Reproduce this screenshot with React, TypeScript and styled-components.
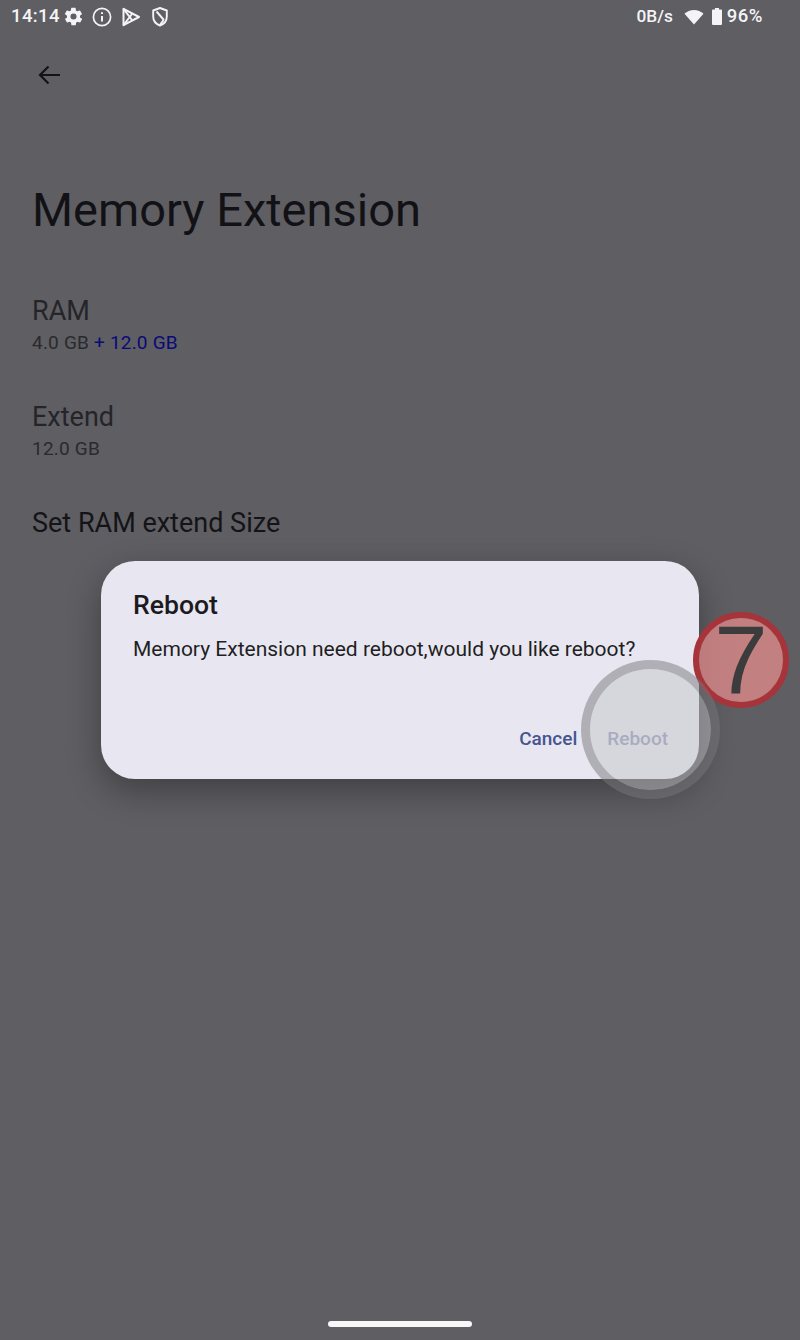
import styled, { createGlobalStyle } from "styled-components";

const Global = createGlobalStyle`
  html, body {
    margin: 0;
    padding: 0;
    background: #5e5e63;
  }
  * {
    box-sizing: border-box;
  }
`;

const Screen = styled.div`
  position: relative;
  width: 800px;
  height: 1340px;
  overflow: hidden;
  background: #5e5e63;
  font-family: Roboto, "Liberation Sans", sans-serif;
  color: #1b1b1f;
`;

const StatusBar = styled.div`
  height: 33px;
  padding: 0 37px 0 11px;
  display: flex;
  align-items: center;
  justify-content: space-between;
  color: #f4f4f6;
`;

const StatusGroup = styled.div`
  display: flex;
  align-items: center;
`;

const Clock = styled.span`
  font-size: 18.5px;
  font-weight: 500;
  letter-spacing: 0.4px;
  margin: -2px 3px 0 0;
`;

const StatusIcon = styled.svg<{ $gap?: number }>`
  display: block;
  margin-left: ${(p) => p.$gap ?? 0}px;
`;

const Speed = styled.span`
  font-size: 17.3px;
  font-weight: 500;
  margin: -2px 11px 0 0;
`;

const Percent = styled.span`
  font-size: 18.5px;
  font-weight: 500;
  letter-spacing: 0.5px;
  margin: -2px 0 0 5px;
`;

const Content = styled.div`
  padding: 0 32px;
`;

const BackButton = styled.div`
  height: 24px;
  margin: 30px 0 0 4px;
  color: #141416;
`;

const Title = styled.h1`
  margin: 93px 0 0;
  font-size: 47px;
  line-height: 60px;
  font-weight: 400;
  color: #121216;
`;

const Section = styled.div<{ $top: number }>`
  margin-top: ${(p) => p.$top}px;
`;

const Label = styled.div<{ $strong?: boolean }>`
  font-size: 27px;
  line-height: 36px;
  color: ${(p) => (p.$strong ? "#141417" : "#252529")};
`;

const Value = styled.div`
  font-size: 19px;
  line-height: 28px;
  letter-spacing: 0.2px;
  color: #2a2a2e;
`;

const Extra = styled.span`
  color: #0a0a78;
`;

const Dialog = styled.div`
  position: absolute;
  left: 101px;
  top: 561px;
  width: 598px;
  height: 218px;
  padding: 27px 32px 0;
  border-radius: 34px;
  background: #e8e7f1;
  box-shadow: 0 12px 34px rgba(0, 0, 0, 0.32);
`;

const DialogTitle = styled.div`
  font-size: 26.6px;
  line-height: 34px;
  font-weight: 500;
  color: #1b1b1f;
`;

const DialogBody = styled.div`
  margin-top: 14px;
  font-size: 21px;
  line-height: 26px;
  white-space: nowrap;
  color: #1f1f23;
`;

const DialogActions = styled.div`
  position: absolute;
  right: 31px;
  bottom: 28px;
  display: flex;
  gap: 30px;
`;

const Action = styled.span<{ $muted?: boolean }>`
  font-size: 19px;
  line-height: 24px;
  font-weight: 500;
  color: ${(p) => (p.$muted ? "#8e96b8" : "#46558f")};
`;

const Touch = styled.div`
  position: absolute;
  left: 581px;
  top: 660px;
  width: 139px;
  height: 139px;
  border-radius: 50%;
  border: 9px solid rgba(120, 120, 124, 0.5);
  background: rgba(196, 196, 200, 0.49);
  background-clip: padding-box;
`;

const StepBadge = styled.div`
  position: absolute;
  left: 693px;
  top: 612px;
  width: 96px;
  height: 96px;
  border-radius: 50%;
  border: 6px solid #a5353b;
  background: rgba(243, 145, 145, 0.67);
  display: flex;
  align-items: center;
  justify-content: center;
  font-family: "Liberation Sans", Arimo, sans-serif;
  font-size: 96px;
  line-height: 1;
  color: #3c3c3c;
`;

const HomeBar = styled.div`
  position: absolute;
  left: 328px;
  top: 1321px;
  width: 144px;
  height: 6px;
  border-radius: 3px;
  background: #f7f7f8;
`;

const App = () => {
  return (
    <Screen>
      <Global />
      <StatusBar>
        <StatusGroup>
          <Clock>14:14</Clock>
          <StatusIcon width="21" height="21" viewBox="0 0 24 24" fill="currentColor">
            <path d="M19.4 13a7.6 7.6 0 0 0 0-2l2.1-1.6a.5.5 0 0 0 .1-.6l-2-3.5a.5.5 0 0 0-.6-.2l-2.5 1a7.3 7.3 0 0 0-1.7-1l-.4-2.7a.5.5 0 0 0-.5-.4h-4a.5.5 0 0 0-.5.4l-.4 2.7a7.3 7.3 0 0 0-1.7 1l-2.5-1a.5.5 0 0 0-.6.2l-2 3.5a.5.5 0 0 0 .1.6L4.6 11a7.6 7.6 0 0 0 0 2l-2.1 1.6a.5.5 0 0 0-.1.6l2 3.5c.1.2.4.3.6.2l2.5-1c.5.4 1.1.7 1.7 1l.4 2.7c0 .2.2.4.5.4h4c.3 0 .5-.2.5-.4l.4-2.7c.6-.3 1.2-.6 1.7-1l2.5 1c.2.1.5 0 .6-.2l2-3.5a.5.5 0 0 0-.1-.6ZM12 15.5a3.5 3.5 0 1 1 0-7 3.5 3.5 0 0 1 0 7Z" />
          </StatusIcon>
          <StatusIcon $gap={8} width="20" height="20" viewBox="0 0 20 20" fill="none" stroke="currentColor" strokeWidth="1.7">
            <circle cx="10" cy="10" r="8.6" />
            <path d="M10 9v5.500M10 5.300v1.800" strokeWidth="2" />
          </StatusIcon>
          <StatusIcon $gap={10} width="18" height="20" viewBox="0 0 18 20" fill="none" stroke="currentColor" strokeWidth="2" strokeLinejoin="round">
            <path d="M1.500 1.800v16.400L17 10Z" />
            <path d="M1.500 1.800 10 13M1.500 18.200 10 7" />
          </StatusIcon>
          <StatusIcon $gap={12} width="16" height="20" viewBox="0 0 16 20" fill="none" stroke="currentColor" strokeWidth="1.9" strokeLinejoin="round">
            <path d="M8 1 1.200 3.500v6c0 4.200 2.800 7.600 6.800 9 4-1.400 6.800-4.800 6.800-9v-6Z" />
            <path d="M4.500 4.500 11.500 12.500c0 1-1.500 2.500-3.500 5.500" />
          </StatusIcon>
        </StatusGroup>
        <StatusGroup>
          <Speed>0B/s</Speed>
          <StatusIcon width="20" height="16" viewBox="0 0 20 16" fill="currentColor">
            <path d="M10 15.500 0.500 4.800C3 2.400 6.300 1 10 1s7 1.400 9.500 3.800Z" />
          </StatusIcon>
          <StatusIcon $gap={8} width="10" height="17" viewBox="0 0 10 17" fill="currentColor">
            <path d="M3 0h4v1.500h2a1 1 0 0 1 1 1V16a1 1 0 0 1-1 1H1a1 1 0 0 1-1-1V2.500a1 1 0 0 1 1-1h2Z" />
          </StatusIcon>
          <Percent>96%</Percent>
        </StatusGroup>
      </StatusBar>

      <Content>
        <BackButton>
          <svg width="26" height="24" viewBox="0 0 26 24" fill="none" stroke="currentColor" strokeWidth="2.2">
            <path d="M24 12H4M12.500 3.500 4 12l8.500 8.500" />
          </svg>
        </BackButton>
        <Title>Memory Extension</Title>
        <Section $top={53}>
          <Label>RAM</Label>
          <Value>
            4.0 GB <Extra>+ 12.0 GB</Extra>
          </Value>
        </Section>
        <Section $top={42}>
          <Label>Extend</Label>
          <Value>12.0 GB</Value>
        </Section>
        <Section $top={42}>
          <Label $strong>Set RAM extend Size</Label>
        </Section>
      </Content>

      <Dialog>
        <DialogTitle>Reboot</DialogTitle>
        <DialogBody>Memory Extension need reboot,would you like reboot?</DialogBody>
        <DialogActions>
          <Action>Cancel</Action>
          <Action $muted>Reboot</Action>
        </DialogActions>
      </Dialog>
      <StepBadge>7</StepBadge>
      <Touch />
      <HomeBar />
    </Screen>
  );
};

export default App;
